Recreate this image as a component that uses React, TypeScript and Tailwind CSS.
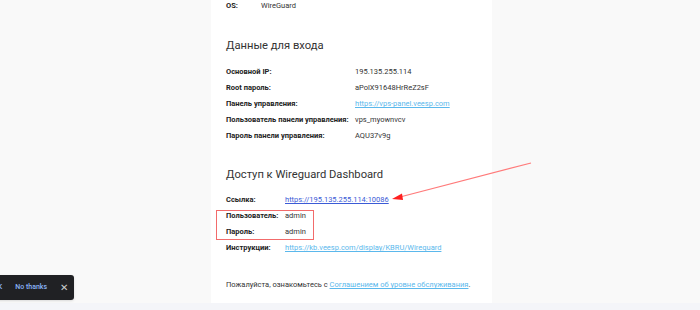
import React from 'react'

const font = { fontFamily: 'Roboto, "Liberation Sans", sans-serif' }

function Row({ label, children, labelW }: { label: string; children: React.ReactNode; labelW: string }) {
  return (
    <div className="flex h-[16px] items-center text-[7.5px] text-[#333]">
      <div className={`${labelW} shrink-0 font-bold text-[#222]`}>{label}</div>
      <div>{children}</div>
    </div>
  )
}

export default function App() {
  return (
    <div className="relative h-[310px] w-[700px] overflow-hidden bg-[#f9f9f9]" style={font}>
      <div className="h-[303px]">
        <div className="relative ml-[211px] h-[303px] w-[281px] bg-white pl-[15px]">
          {/* OS */}
          <div className="flex h-[12px] items-center text-[7.5px] text-[#333]">
            <div className="w-[35px] font-bold text-[#222]">OS:</div>
            <div>WireGuard</div>
          </div>

          <h2 className="mt-[24px] flex h-[20px] items-center text-[11.2px] text-[#333]">Данные для входа</h2>
          <div className="mt-[8px]">
            <Row label="Основной IP:" labelW="w-[129px]">195.135.255.114</Row>
            <Row label="Root пароль:" labelW="w-[129px]">aPolX91648HrReZ2sF</Row>
            <Row label="Панель управления:" labelW="w-[129px]">
              <span className="text-[#5bb8ec] underline">https://vps-panel.veesp.com</span>
            </Row>
            <Row label="Пользователь панели управления:" labelW="w-[129px]">vps_myownvcv</Row>
            <Row label="Пароль панели управления:" labelW="w-[129px]">AQU37v9g</Row>
          </div>

          <h2 className="mt-[21px] flex h-[20px] items-center text-[11.2px] text-[#333]">Доступ к Wireguard Dashboard</h2>
          <div className="mt-[7px]">
            <Row label="Ссылка:" labelW="w-[59px]">
              <span className="text-[#3b5bd6] underline">https://195.135.255.114:10086</span>
            </Row>
            <Row label="Пользователь:" labelW="w-[59px]">admin</Row>
            <Row label="Пароль:" labelW="w-[59px]">admin</Row>
            <Row label="Инструкции:" labelW="w-[59px]">
              <span className="text-[#5bb8ec] underline">https://kb.veesp.com/display/KBRU/Wireguard</span>
            </Row>
          </div>

          <p className="mt-[21px] flex h-[16px] items-center text-[7.5px] text-[#333]">
            Пожалуйста, ознакомьтесь с&nbsp;
            <span className="text-[#5bb8ec] underline">Соглашением об уровне обслуживания</span>.
          </p>

          {/* red highlight box */}
          <div className="absolute left-[5px] top-[210px] h-[30px] w-[98px] border border-[#f26b6b]" />
        </div>
      </div>
      <div className="h-[7px] bg-[#f4f5f9]" />

      {/* arrow */}
      <svg className="absolute left-0 top-0" width="700" height="310">
        <line x1="531" y1="163" x2="400" y2="197" stroke="#ff7a7a" strokeWidth="1.2" />
        <polygon points="392,199 402,193.5 403,200" fill="#ff2020" />
      </svg>

      {/* toast */}
      <div className="absolute left-[-9px] top-[275px] flex h-[25px] w-[83px] items-center rounded-[3px] bg-[#202124] text-[7px] font-medium text-[#8ab4f8] shadow">
        <span className="ml-[2px]">OK</span>
        <span className="ml-[13px]">No thanks</span>
        <span className="ml-[13px] text-[10px] text-[#ccc]">✕</span>
      </div>
    </div>
  )
}
